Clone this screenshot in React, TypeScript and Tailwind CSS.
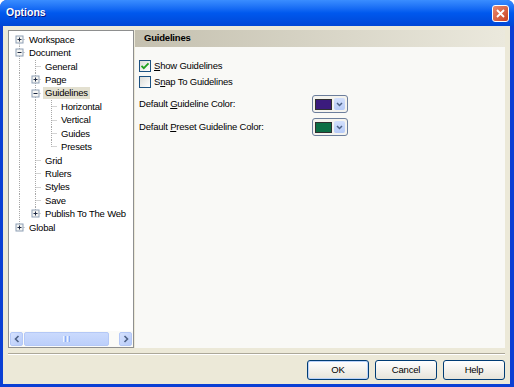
import React from 'react';

type TreeRow = {
  label: string;
  depth: number;
  rails: boolean[];
  first?: boolean;
  last?: boolean;
  box?: '+' | '-';
  selected?: boolean;
};

const ROW_H = 13.43;
const LINE = '#A8A8A8';

const tree: TreeRow[] = [
  { label: 'Workspace', depth: 0, rails: [], first: true, box: '+' },
  { label: 'Document', depth: 0, rails: [], box: '-' },
  { label: 'General', depth: 1, rails: [true] },
  { label: 'Page', depth: 1, rails: [true], box: '+' },
  { label: 'Guidelines', depth: 1, rails: [true], box: '-', selected: true },
  { label: 'Horizontal', depth: 2, rails: [true, true] },
  { label: 'Vertical', depth: 2, rails: [true, true] },
  { label: 'Guides', depth: 2, rails: [true, true] },
  { label: 'Presets', depth: 2, rails: [true, true], last: true },
  { label: 'Grid', depth: 1, rails: [true] },
  { label: 'Rulers', depth: 1, rails: [true] },
  { label: 'Styles', depth: 1, rails: [true] },
  { label: 'Save', depth: 1, rails: [true] },
  { label: 'Publish To The Web', depth: 1, rails: [true], last: true, box: '+' },
  { label: 'Global', depth: 0, rails: [], last: true, box: '+' },
];

// dotted tree connectors + expander box for one row
function Connector({ row }: { row: TreeRow }) {
  const w = (row.depth + 1) * 16;
  const mid = 6.5;
  const cx = (col: number) => col * 16 + 10.5;
  const x = cx(row.depth);
  return (
    <svg width={w} height={ROW_H} className="shrink-0">
      {row.rails.map((on, i) =>
        on ? (
          <line key={i} x1={cx(i)} y1={0} x2={cx(i)} y2={ROW_H} stroke={LINE} strokeDasharray="1 1" />
        ) : null
      )}
      <line x1={x} y1={row.first ? mid : 0} x2={x} y2={row.last ? mid : ROW_H} stroke={LINE} strokeDasharray="1 1" />
      <line x1={x} y1={mid} x2={w + 2} y2={mid} stroke={LINE} strokeDasharray="1 1" />
      {row.box && (
        <g>
          <rect x={x - 3.5} y={mid - 3.5} width={7} height={7} fill="#F6F6F3" stroke="#8E9FB5" />
          <line x1={x - 2} y1={mid} x2={x + 2} y2={mid} stroke="#1E2A44" />
          {row.box === '+' && <line x1={x} y1={mid - 2} x2={x} y2={mid + 2} stroke="#1E2A44" />}
        </g>
      )}
    </svg>
  );
}

function ScrollArrow({ dir }: { dir: 'left' | 'right' }) {
  return (
    <div className="w-[13px] h-[14px] rounded-[2px] border border-[#B4C8F6] bg-gradient-to-br from-[#D6E2FE] to-[#B7CBF9] flex items-center justify-center">
      <svg width="6" height="8" viewBox="0 0 6 8">
        <polyline
          points={dir === 'left' ? '4.5,1 1.5,4 4.5,7' : '1.5,1 4.5,4 1.5,7'}
          fill="none"
          stroke="#4D6185"
          strokeWidth="1.6"
        />
      </svg>
    </div>
  );
}

function Checkbox({ checked }: { checked?: boolean }) {
  return (
    <div className="w-[12px] h-[12px] border border-[#1C5180] bg-gradient-to-br from-[#DCDCD7] to-[#FFFFFF] flex items-center justify-center shrink-0">
      {checked && (
        <svg width="10" height="10" viewBox="0 0 10 10">
          <polyline points="1.5,4.8 3.8,7.2 8.5,2.3" fill="none" stroke="#21A121" strokeWidth="1.8" />
        </svg>
      )}
    </div>
  );
}

function ColorButton({ color }: { color: string }) {
  return (
    <div className="w-[36px] h-[18px] rounded-[3px] border border-[#6C7E9C] bg-[#F4F3EE] flex items-center gap-[2px] px-[2px]">
      <div className="w-[17px] h-[11px] border border-[#2F2F2F]" style={{ backgroundColor: color }} />
      <div className="w-[11px] h-[12px] rounded-[2px] bg-gradient-to-b from-[#D3E0FC] to-[#B6CAF7] flex items-center justify-center">
        <svg width="7" height="5" viewBox="0 0 7 5">
          <polyline points="1,1 3.5,3.5 6,1" fill="none" stroke="#4D6185" strokeWidth="1.5" />
        </svg>
      </div>
    </div>
  );
}

function DialogButton({ label, isDefault }: { label: string; isDefault?: boolean }) {
  return (
    <button
      className={`w-[62px] h-[20px] rounded-[3px] border border-[#003C74] bg-gradient-to-b from-[#FFFFFF] to-[#E6E4DA] text-[9.5px] text-black ${
        isDefault ? 'shadow-[inset_0_0_0_1px_#B9D1FA]' : ''
      }`}
    >
      {label}
    </button>
  );
}

export default function App() {
  return (
    <div className="w-[514px] h-[387px] bg-white font-['Liberation_Sans',Arial,sans-serif] text-[9.5px] tracking-[-0.2px] text-black">
      <div className="w-full h-full rounded-t-[7px] bg-[#0A3FD4] flex flex-col overflow-hidden">
        {/* Title bar */}
        <div className="h-[26px] shrink-0 flex items-center justify-between pl-[6px] pr-[5px] bg-gradient-to-b from-[#3A8DFF] via-[#0058EE] to-[#0047D6]">
          <span className="text-white font-bold text-[10.5px] tracking-normal [text-shadow:1px_1px_0_#0A1883]">Options</span>
          <div className="w-[17px] h-[17px] rounded-[3px] border border-white bg-gradient-to-br from-[#EA8A6E] to-[#C83F1E] flex items-center justify-center">
            <svg width="9" height="9" viewBox="0 0 9 9">
              <path d="M1 1 L8 8 M8 1 L1 8" stroke="white" strokeWidth="1.8" />
            </svg>
          </div>
        </div>

        {/* Client area */}
        <div className="flex-1 ml-[3px] mr-[4px] mb-[3px] bg-[#ECE9D8] flex flex-col pt-[4px] px-[5px]">
          <div className="flex h-[318px] gap-[1px]">
            {/* Tree */}
            <div className="w-[126px] border border-[#8E8F8F] bg-white flex flex-col">
              <div className="flex-1 pt-[2px]">
                {tree.map((row) => (
                  <div key={row.label} className="flex items-center h-[13.43px]">
                    <Connector row={row} />
                    <span
                      className={`ml-[2px] px-[2px] leading-[12px] whitespace-nowrap ${
                        row.selected ? 'bg-[#E3E0D0]' : ''
                      }`}
                    >
                      {row.label}
                    </span>
                  </div>
                ))}
              </div>
              {/* Horizontal scrollbar */}
              <div className="h-[16px] flex items-center px-[1px] gap-[1px] bg-[#FBFBF8]">
                <ScrollArrow dir="left" />
                <div className="w-[85px] h-[14px] rounded-[2px] border border-[#B4C8F6] bg-gradient-to-b from-[#CADAFD] to-[#BCCFFA] flex items-center justify-center gap-[1px]">
                  <div className="w-[1px] h-[6px] bg-[#EEF4FE]" />
                  <div className="w-[1px] h-[6px] bg-[#8CB0F8]" />
                  <div className="w-[1px] h-[6px] bg-[#EEF4FE]" />
                  <div className="w-[1px] h-[6px] bg-[#8CB0F8]" />
                </div>
                <div className="flex-1" />
                <ScrollArrow dir="right" />
              </div>
            </div>

            {/* Page */}
            <div className="flex-1 flex flex-col bg-[#F9F9F6]">
              <div className="h-[17px] flex items-center pl-[9px] bg-gradient-to-r from-[#C4C0AF] to-[#EBE9DD] font-bold">
                Guidelines
              </div>
              <div className="flex-1 pl-[4px] pt-[13px] flex flex-col">
                <div className="flex items-center gap-[3px] h-[12px]">
                  <Checkbox checked />
                  <span>
                    <u className="underline-offset-1">S</u>how Guidelines
                  </span>
                </div>
                <div className="flex items-center gap-[3px] h-[12px] mt-[4px]">
                  <Checkbox />
                  <span>
                    S<u className="underline-offset-1">n</u>ap To Guidelines
                  </span>
                </div>
                <div className="flex items-center h-[18px] mt-[7px]">
                  <span className="w-[173px]">
                    Default <u className="underline-offset-1">G</u>uideline Color:
                  </span>
                  <ColorButton color="#3B1B7D" />
                </div>
                <div className="flex items-center h-[18px] mt-[5px]">
                  <span className="w-[173px]">
                    Default <u className="underline-offset-1">P</u>reset Guideline Color:
                  </span>
                  <ColorButton color="#0C6E45" />
                </div>
              </div>
            </div>
          </div>

          {/* Separator */}
          <div className="mt-[5px] border-t border-[#ACA899] border-b border-b-white" />

          {/* Buttons */}
          <div className="flex justify-end gap-[6px] mt-[5px]">
            <DialogButton label="OK" isDefault />
            <DialogButton label="Cancel" />
            <DialogButton label="Help" />
          </div>
        </div>
      </div>
    </div>
  );
}
